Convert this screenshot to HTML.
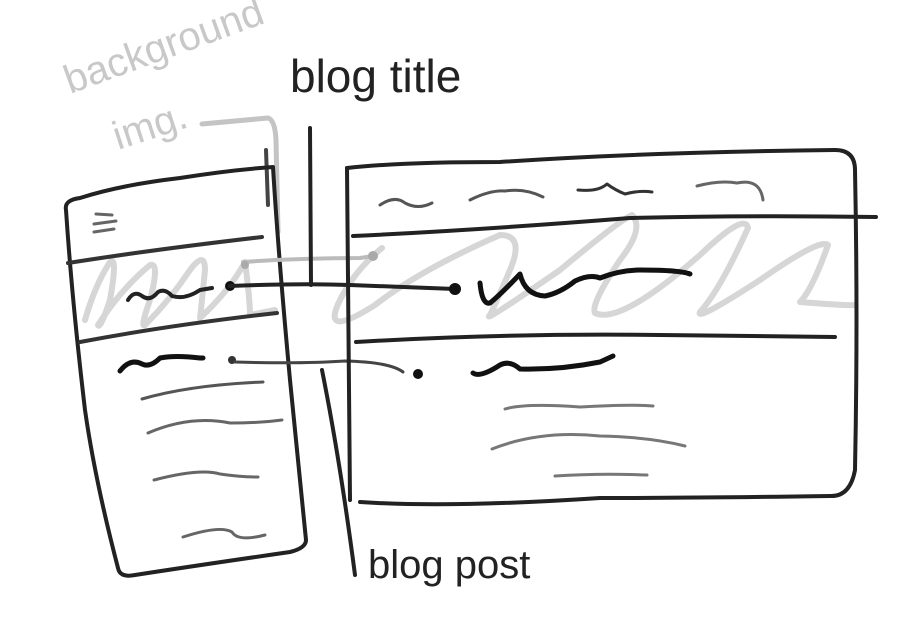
<!DOCTYPE html>
<html><head><meta charset="utf-8"><style>
html,body{margin:0;padding:0;background:#fff;}
svg{display:block}
text{font-family:"Liberation Sans",sans-serif;}
</style></head><body>
<svg width="902" height="618" viewBox="0 0 902 618" xmlns="http://www.w3.org/2000/svg" fill="none" stroke-linecap="round" stroke-linejoin="round">
<text x="70" y="94" font-size="40" fill="#c8c8c8" stroke="none" transform="rotate(-20 70 94)">background</text>
<text x="118" y="150" font-size="40" fill="#c8c8c8" stroke="none" transform="rotate(-18 118 150)">img.</text>
<text x="290" y="92" font-size="46" fill="#222" stroke="none">blog title</text>
<text x="368" y="578" font-size="40" fill="#222" stroke="none">blog post</text>

<path d="M202 124 L268 118 Q275 120 276 140 L278 232" stroke="#c4c4c4" stroke-width="5"/>
<path d="M266 150 L268 205" stroke="#444" stroke-width="4"/>

<g stroke="#d6d6d6" stroke-width="6">
<path d="M85 320 Q95 285 110 262 Q118 255 110 300 Q100 330 98 325 Q120 290 150 265 Q160 262 150 300 Q140 328 145 325 Q170 300 190 270 Q205 250 205 270 Q200 320 200 318 Q230 290 245 262 Q250 300 250 315 L275 310"/>
<path d="M382 248 Q355 270 340 300 Q320 340 375 305 Q420 270 500 235 Q525 235 510 270 Q495 305 490 315 Q480 325 560 270 Q620 220 632 215 Q645 228 620 260 Q590 305 595 313 Q620 325 700 255 Q745 212 748 228 Q720 290 700 312 Q695 322 760 280 Q820 238 828 245 Q812 290 800 302 Q850 306 855 305"/>
</g>

<path d="M66 210 Q64 200 80 198 Q120 185 180 178 Q230 170 273 167 Q278 250 290 380 Q300 480 306 540 Q306 548 290 552 Q200 565 135 575 Q120 578 118 568 Q95 480 85 410 Q72 300 66 210 Z" stroke="#222" stroke-width="4"/>
<path d="M96 214 L112 215 M94 224 L116 221 M94 232 L114 229" stroke="#666" stroke-width="3"/>
<path d="M68 263 Q150 250 262 237" stroke="#333" stroke-width="4"/>
<path d="M80 342 Q170 325 277 313" stroke="#333" stroke-width="4"/>
<path d="M128 300 Q134 290 142 296 Q150 302 158 292 Q165 288 172 296 Q185 300 200 290 L212 288" stroke="#222" stroke-width="4"/>
<path d="M120 371 Q130 358 142 364 Q150 368 160 358 Q175 355 200 358 L203 358" stroke="#111" stroke-width="5"/>
<circle cx="230" cy="286" r="5" fill="#111" stroke="none"/>
<circle cx="232" cy="360" r="4" fill="#333" stroke="none"/>
<path d="M243 262 Q300 258 360 258 L373 256" stroke="#bbb" stroke-width="4"/>
<circle cx="245" cy="265" r="4" fill="#aaa" stroke="none"/>
<circle cx="373" cy="256" r="5" fill="#aaa" stroke="none"/>
<path d="M142 399 Q190 385 263 382" stroke="#555" stroke-width="3"/>
<path d="M148 433 Q190 415 230 423 Q260 423 282 420" stroke="#666" stroke-width="3"/>
<path d="M154 480 Q200 468 220 474 Q240 477 258 477" stroke="#666" stroke-width="3"/>
<path d="M183 537 Q220 525 232 532 Q238 542 265 535" stroke="#666" stroke-width="3"/>

<path d="M230 286 Q300 283 350 285 Q400 287 455 289" stroke="#222" stroke-width="4"/>
<circle cx="455" cy="289" r="6" fill="#111" stroke="none"/>
<path d="M235 362 Q300 364 345 361 Q390 362 403 372" stroke="#444" stroke-width="3"/>
<circle cx="418" cy="374" r="5" fill="#111" stroke="none"/>

<path d="M310 128 L311 285" stroke="#222" stroke-width="4"/>
<path d="M322 370 Q340 460 355 575" stroke="#222" stroke-width="4"/>

<path d="M347 168 Q400 162 500 162 Q650 152 835 150 Q855 150 855 170 Q858 320 855 470 Q850 497 830 496 Q700 498 600 498 Q450 508 360 502" stroke="#222" stroke-width="4"/>
<path d="M347 168 Q349 330 350 500" stroke="#222" stroke-width="4"/>
<path d="M380 205 Q395 195 405 203 Q418 210 432 203" stroke="#555" stroke-width="3"/>
<path d="M470 200 Q490 190 505 191 Q525 188 543 197" stroke="#555" stroke-width="3"/>
<path d="M578 190 Q598 192 607 184 Q615 190 625 194 Q640 190 652 192" stroke="#333" stroke-width="3"/>
<path d="M697 186 Q720 180 737 183 Q760 178 763 200" stroke="#666" stroke-width="3"/>
<path d="M353 236 Q480 230 630 218 Q750 215 876 217" stroke="#222" stroke-width="4"/>
<path d="M356 342 Q505 333 660 335 Q760 336 835 337" stroke="#222" stroke-width="4"/>
<path d="M480 283 Q482 305 490 303 Q500 295 520 274 Q525 295 545 296 Q560 293 575 281 Q590 274 600 278 Q620 270 640 270 Q680 270 690 274" stroke="#111" stroke-width="5"/>
<path d="M473 373 Q480 378 500 365 Q510 360 520 369 Q560 370 600 362 L613 356" stroke="#111" stroke-width="5"/>
<path d="M505 409 Q525 403 580 407 Q630 404 653 406" stroke="#777" stroke-width="3"/>
<path d="M492 449 Q540 430 600 436 Q650 437 685 446" stroke="#777" stroke-width="3"/>
<path d="M555 476 Q600 473 647 475" stroke="#777" stroke-width="3"/>
</svg>
</body></html>
